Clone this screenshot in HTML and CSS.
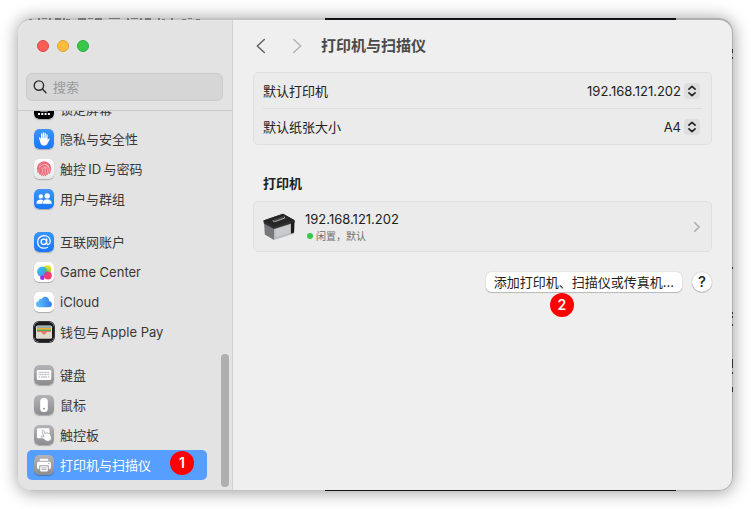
FILE: index.html
```html
<!DOCTYPE html>
<html lang="zh-CN">
<head>
<meta charset="utf-8">
<title>打印机与扫描仪</title>
<link rel="stylesheet" href="styles.css">
</head>
<body>
<svg width="0" height="0" class="defs" aria-hidden="true">
  <defs>
    <linearGradient id="blue" x2="0" y2="1"><stop stop-color="#3d95fb"/><stop offset="1" stop-color="#1877fb"/></linearGradient>
    <linearGradient id="gray" x2="0" y2="1"><stop stop-color="#b4b4b8"/><stop offset="1" stop-color="#8c8c91"/></linearGradient>
    <linearGradient id="white" x2="0" y2="1"><stop stop-color="#ffffff"/><stop offset="1" stop-color="#e6e6e6"/></linearGradient>
    <linearGradient id="cloud" x2="1" y2="0"><stop stop-color="#62c3f8"/><stop offset="1" stop-color="#2f7cf0"/></linearGradient>
    <linearGradient id="gc1" x2="1" y2="1"><stop stop-color="#35c6f4"/><stop offset="1" stop-color="#4a8cf5"/></linearGradient>
    <linearGradient id="gc2" x2="0" y2="1"><stop stop-color="#fbe21c"/><stop offset="1" stop-color="#7ed04a"/></linearGradient>
  </defs>
</svg>
<div class="frame">
  <svg class="fringe fringe-top" width="190" height="2" aria-hidden="true">
    <path fill="#777" d="M1 1h3v1h-3zM10 0h2v2h-2zM14 0h5v1h-5zM21 0h2v2h-2zM27 0h6v2h-6zM35 0h2v2h-2zM38 1h4v1h-4zM50 0h8v2h-8zM60 0h5v1h-5zM67 0h7v2h-7zM81 0h11v1h-11zM99 0h2v2h-2zM103 0h7v1h-7zM112 0h2v2h-2zM117 0h6v2h-6zM130 0h2v2h-2zM134 1h3v1h-3zM143 0h2v2h-2zM154 1h4v1h-4zM160 0h4v1h-4zM168 1h4v1h-4z"/>
  </svg>
  <svg class="fringe fringe-right" width="1" height="400" aria-hidden="true">
    <path fill="#333" d="M0 31h1v4H0zM0 39h1v2H0zM0 249h1v2H0zM0 294h1v2H0zM0 298h1v2H0zM0 306h1v2H0zM0 341h1v9H0zM0 354h1v2H0zM0 369h1v5H0z"/>
  </svg>
  <div class="window">
    <aside class="sidebar">
      <div class="sidebar-head">
        <div class="lights">
          <button class="light red" aria-label="关闭"></button>
          <button class="light yellow" aria-label="最小化"></button>
          <button class="light green" aria-label="缩放"></button>
        </div>
        <label class="search">
          <svg width="14" height="14" viewBox="0 0 14 14" fill="none" stroke="#2b2b2b" stroke-width="1.4" stroke-linecap="round"><circle cx="5.9" cy="5.6" r="4.7"/><path d="M9.4 9.1 13 12.7"/></svg>
          <input type="text" placeholder="搜索" aria-label="搜索">
        </label>
      </div>
      <nav class="list">
        <div class="group">
          <a class="item" href="#lock">
            <svg class="icon" viewBox="0 0 20 20"><rect width="20" height="20" rx="5"/><path d="M7 9V7a3 3 0 0 1 6 0v2" fill="none" stroke="#fff" stroke-width="1.5"/><rect x="6" y="7" width="8" height="5.5" rx="1" fill="#fff"/><path d="M4 14h2v2H4zM7.3 14h2v2h-2zM10.6 14h2v2h-2zM13.9 14h2v2h-2z" fill="#fff"/></svg>锁定屏幕</a>
          <a class="item" href="#privacy">
            <svg class="icon" viewBox="0 0 20 20"><rect width="20" height="20" rx="5" fill="url(#blue)"/><path d="M5.800 11.500 5 9.200c-.2-.9.9-1.200 1.300-.5l.7 1.500V5c0-.9 1.300-.9 1.300 0v3.800h.4V3.900c0-.9 1.400-.9 1.400 0v4.900h.4V4.300c0-.9 1.400-.9 1.400 0v4.800h.4V5.800c0-.9 1.300-.9 1.300 0v5.100l.8-1c.7-.7 1.500-.2 1.100.6l-2 4c-.6 1.400-1.700 2.100-3.400 2.100-2.400 0-3.500-1.300-4.300-5.100z" fill="#fff"/><path d="M8.500 5v4M10.300 4.500V9M12.100 5v4" stroke="#9cc9fc" stroke-width=".5"/></svg>隐私与安全性</a>
          <a class="item" href="#touchid">
            <svg class="icon" viewBox="0 0 20 20"><rect width="20" height="20" rx="5" fill="url(#white)"/><circle cx="10" cy="9.800" r="7" fill="#f6b9c0"/><g fill="none" stroke="#eb5668" stroke-width=".9" stroke-linecap="round"><path d="M4.200 6.200c3-4.600 9-4.600 11.800 0M3.400 10c.2-8 13-9 13.400.2M3.900 13c-1.200-9.700 12-12 12.300-2.500 0 1.700-.2 3-.8 4M5.500 15C2.400 5.600 14.100 3.700 14.300 10.600c0 2-.3 3.700-1.200 5M7.300 16.200c-4-9.600 5.200-11.600 5.300-5.600 0 2.200-.3 4-1.200 6M9.300 16.800c-1.500-3-2-4.600-1.800-6.100.3-2.700 3.200-2.400 3.400-.1.100 2-.1 3.400-.6 4.800M9.300 10.400c0 1.400.1 2.600.5 3.800"/></g></svg>触控&thinsp;ID&thinsp;与密码</a>
          <a class="item" href="#users">
            <svg class="icon" viewBox="0 0 20 20"><rect width="20" height="20" rx="5" fill="url(#blue)"/><g fill="#fff"><circle cx="6.800" cy="7.400" r="2.200"/><path d="M2.400 14.300c0-5 8.200-5 8.200 0 0 .4-.2.5-.5.5H2.900c-.3 0-.5-.1-.5-.5z"/><circle cx="13.200" cy="7" r="2.700"/><path stroke="#2b86fb" stroke-width=".6" d="M8.400 14.400c0-5.800 9.600-5.800 9.600 0 0 .5-.2.700-.6.700H9c-.4 0-.6-.2-.6-.7z"/></g></svg>用户与群组</a>
        </div>
        <div class="group">
          <a class="item" href="#accounts">
            <svg class="icon" viewBox="0 0 20 20"><rect width="20" height="20" rx="5" fill="url(#blue)"/><g fill="none" stroke="#fff" stroke-width="1.300" stroke-linecap="round"><circle cx="9.800" cy="9.800" r="2.700"/><path d="M12.700 7v4.100c0 2.200 3.500 2 3.500-1.600 0-3.400-2.600-5.800-6.200-5.800-3.700 0-6.400 2.700-6.400 6.300 0 3.700 2.600 6.200 6.400 6.200 1.300 0 2.400-.2 3.300-.7"/></g></svg>互联网账户</a>
          <a class="item" href="#gamecenter">
            <svg class="icon" viewBox="0 0 20 20"><rect width="20" height="20" rx="5" fill="#fff"/><circle cx="13.300" cy="7.200" r="4" fill="url(#gc2)"/><circle cx="8.300" cy="9.700" r="5.200" fill="url(#gc1)"/><circle cx="8.300" cy="15.800" r="2.200" fill="#9b2be6"/><path d="M10.400 6a4 4 0 0 0 3 5.200 5 5 0 0 0-3-5.200z" fill="#43c46a"/><circle cx="13.900" cy="13.500" r="3.900" fill="#fb3a6b"/><path d="M10 13.400c.1-2.200 1.500-3.500 3.400-3.700.3 2-.9 4.400-3.200 5z" fill="#c23fae"/></svg>Game Center</a>
          <a class="item" href="#icloud">
            <svg class="icon" viewBox="0 0 20 20"><rect width="20" height="20" rx="5" fill="#fff"/><path d="M5.500 15.200c-4.600 0-4.700-5.600-.9-6 .1-2 1.800-2.800 3.100-2.300 2-3.600 7.300-2.300 7.400 2 3.900.6 3.800 6.300-.3 6.300z" fill="url(#cloud)"/></svg>iCloud</a>
          <a class="item" href="#wallet">
            <svg class="icon wallet" viewBox="0 0 20 20"><rect width="20" height="20" rx="5" fill="#1d1d1f"/><rect x="2" y="3.600" width="16" height="13" rx="1.600" fill="#dedacd"/><path d="M3 4.500h14v1.300H3z" fill="#4e9dc8"/><path d="M3 5.800h14v1.600H3z" fill="#f7a82c"/><path d="M3 7.400h14V9H3z" fill="#4caf50"/><path d="M3 9h14v1.200H3z" fill="#ef7262"/><path d="M2 10h16v5c0 1-.6 1.600-1.600 1.600H3.600C2.600 16.600 2 16 2 15z" fill="#dedacd"/><path d="M7 9.800h6c-.9.500-1 2.700-3 2.700S7.900 10.300 7 9.800z" fill="#ef7262"/></svg>钱包与&thinsp;Apple Pay</a>
        </div>
        <div class="group">
          <a class="item" href="#keyboard">
            <svg class="icon" viewBox="0 0 20 20"><rect width="20" height="20" rx="5" fill="url(#gray)"/><rect x="2.800" y="5" width="14.400" height="10" rx="1.300" fill="#fff"/><path d="M4.500 7.500h11M4.500 9.600h11" stroke="#bcbcc0" stroke-width="1.400" stroke-dasharray="1.200 .4"/><path d="M4.500 12h1.500M7 12h6M14 12h1.500" stroke="#b0b0b4" stroke-width="1.200"/></svg>键盘</a>
          <a class="item" href="#mouse">
            <svg class="icon" viewBox="0 0 20 20"><rect width="20" height="20" rx="5" fill="url(#gray)"/><rect x="6.200" y="3" width="7.600" height="14" rx="3.500" fill="#fff"/><circle cx="10" cy="13.700" r=".9" fill="#8c8c91"/></svg>鼠标</a>
          <a class="item" href="#trackpad">
            <svg class="icon" viewBox="0 0 20 20"><rect width="20" height="20" rx="5" fill="url(#gray)"/><rect x="3" y="3.300" width="12.500" height="10" rx="1.300" fill="#fff"/><path d="M8.200 6.300c-.4-1.200 1.100-1.800 1.600-.6l1.400 3 .2-.6c.5-.6 1.200-.4 1.500.1.500-.5 1.200-.4 1.500.3.700-.4 1.400 0 1.700.7l1.100 2.500c.7 2-.2 3.500-1.900 4.200-2.100.8-3.500.2-4.700-1.100l-3.200-2.600c-.8-.9.1-1.700 1.100-1.200l1.500.8z" fill="#fff" stroke="#98989c" stroke-width=".7"/></svg>触控板</a>
          <a class="item selected" href="#printers" aria-current="page">
            <svg class="icon" viewBox="0 0 20 20"><rect width="20" height="20" rx="5" fill="url(#gray)"/><path d="M5.700 5.800V5c0-.7.500-1.200 1.200-1.200h6.200c.7 0 1.200.5 1.200 1.200v.8z" fill="#fff"/><path d="M5.200 14.300H4.800c-1 0-1.700-.7-1.700-1.700V8.400c0-1 .7-1.700 1.700-1.700h10.400c1 0 1.700.7 1.700 1.700v4.200c0 1-.7 1.700-1.700 1.700h-.4v-3.200c0-.5-.3-.8-.8-.8H6c-.5 0-.8.300-.8.8z" fill="#fff"/><circle cx="14.800" cy="8.600" r=".7" fill="#98989c"/><rect x="6.200" y="11.200" width="7.600" height="5.200" rx=".8" fill="#fff"/><path d="M7.500 12.900h5M7.500 14.600h5" stroke="#98989c" stroke-width=".8"/></svg>打印机与扫描仪<span class="badge on-item">1</span></a>
        </div>
      </nav>
      <div class="scrollbar"></div>
    </aside>
    <main class="main">
      <header class="toolbar">
        <button class="nav-button" aria-label="后退"><svg width="10" height="16" viewBox="0 0 10 16" fill="none" stroke="#666" stroke-width="1.600" stroke-linecap="round" stroke-linejoin="round"><path d="M8.300 1.500 1.300 8l7 6.500"/></svg></button>
        <button class="nav-button" aria-label="前进" disabled><svg width="10" height="16" viewBox="0 0 10 16" fill="none" stroke="#b5b5b5" stroke-width="1.600" stroke-linecap="round" stroke-linejoin="round"><path d="m1.700 1.500 7 6.500-7 6.500"/></svg></button>
        <h1>打印机与扫描仪</h1>
      </header>
      <section class="card settings">
        <div class="row">
          <label for="printer">默认打印机</label>
          <div class="picker">
            <select id="printer"><option>192.168.121.202</option></select>
            <svg class="stepper" width="16" height="16" viewBox="0 0 16 16"><rect width="16" height="16" rx="4" fill="#dedede"/><path d="M4.900 6.200 8 3.300l3.100 2.900M4.900 9.800 8 12.700l3.100-2.900" fill="none" stroke="#222" stroke-width="1.600" stroke-linecap="round" stroke-linejoin="round"/></svg>
          </div>
        </div>
        <div class="row">
          <label for="paper">默认纸张大小</label>
          <div class="picker">
            <select id="paper"><option>A4</option></select>
            <svg class="stepper" width="16" height="16" viewBox="0 0 16 16"><rect width="16" height="16" rx="4" fill="#dedede"/><path d="M4.900 6.200 8 3.300l3.100 2.900M4.900 9.800 8 12.700l3.100-2.900" fill="none" stroke="#222" stroke-width="1.600" stroke-linecap="round" stroke-linejoin="round"/></svg>
          </div>
        </div>
      </section>
      <h2>打印机</h2>
      <a class="card printer" href="#printer-detail">
        <svg width="32" height="28" viewBox="0 0 32 28">
          <path d="m1 9 10 4.500V27L1.800 21.500z" fill="#77787c"/>
          <path d="M11 14.500 31 8v12.500L11 27z" fill="#b9babd"/>
          <path d="m12.500 16 14.500-4v8l-14.500 4.500z" fill="#c9cacd"/>
          <path d="M.4 7.600 20 .8l11.600 6.400v2.300L11 16 .8 10.600z" fill="#303031"/>
          <path d="M.4 7.600 20 .8l11.600 6.400L11 13.500z" fill="#262627"/>
          <path d="M28 9.500 31.500 8l-.4 11.500-3.100 1.300z" fill="#1b1b1c"/>
          <path d="m8.600 7.600 11-4.200 3.500 1.900-11.500 4.200z" fill="#454546"/>
          <path d="m9.800 7.700 1.800 1 10-3.600-.2-1.500" fill="none" stroke="#aaa" stroke-width="1"/>
        </svg>
        <div class="printer-text">
          <div class="printer-name">192.168.121.202</div>
          <div class="status"><span class="dot"></span>闲置，默认</div>
        </div>
        <svg width="8" height="12" viewBox="0 0 8 12" fill="none" stroke="#adadad" stroke-width="1.600" stroke-linecap="round" stroke-linejoin="round"><path d="m1.800 1.700 4.300 4.300-4.300 4.300"/></svg>
      </a>
      <div class="actions">
        <button class="add">添加打印机、扫描仪或传真机...<span class="badge on-button">2</span></button>
        <button class="help" aria-label="帮助">?</button>
      </div>
    </main>
  </div>
</div>
</body>
</html>
```
FILE: styles.css
```css
* {
  box-sizing: border-box;
}

body {
  margin: 0;
  padding: 18px;
  height: 100vh;
  background: #fff;
  color: #222;
  font: 13px/20px Inter, "Noto Sans CJK SC", sans-serif;
}

button,
input,
select {
  font: inherit;
  color: inherit;
  margin: 0;
  padding: 0;
  border: 0;
  background: none;
}

a {
  color: inherit;
  text-decoration: none;
}

.defs {
  position: absolute;
}

/* The strip of desktop that shows around the window's edge. */
.frame {
  position: relative;
  height: 100%;
  padding: 2px 1px 1px 0;
  border-radius: 14px;
  background: linear-gradient(90deg, #c4c4c4 43%, #141216 43% 92%, #b0b0b0 92%);
  box-shadow: 0 1px 17px rgba(0, 0, 0, 0.4);
}

.fringe {
  position: absolute;
  top: 0;
}

.fringe-top {
  left: 10px;
}

.fringe-right {
  right: 0;
}

.window {
  position: relative;
  display: flex;
  height: 100%;
  border-radius: 13px;
  overflow: hidden;
  background: #efefef;
}

.sidebar {
  position: relative;
  display: flex;
  flex-direction: column;
  flex: none;
  width: 215px;
  background: #e3e3e3;
  border-right: 1px solid #d2d2d2;
  color: #383838;
}

.sidebar-head {
  padding: 20px 9px 9px 8px;
  border-bottom: 1px solid #c9c9c9;
}

.lights {
  display: flex;
  gap: 8px;
  padding: 0 11px;
  margin-bottom: 21px;
}

.light {
  width: 12px;
  height: 12px;
  border-radius: 50%;
}

.red {
  background: #fc5b56;
  border: 1px solid #e04845;
}

.yellow {
  background: #fdbc3a;
  border: 1px solid #dfa036;
}

.green {
  background: #38c748;
  border: 1px solid #2eac3a;
}

.search {
  display: flex;
  align-items: center;
  gap: 6px;
  height: 28px;
  padding: 0 6px;
  border: 1px solid #cbcbcb;
  border-radius: 6px;
  background: #d6d6d6;
}

.search input {
  flex: 1;
  min-width: 0;
  outline: 0;
}

.search input::placeholder {
  color: #9a9a9a;
}

.list {
  flex: 1;
  min-height: 0;
  display: flex;
  flex-direction: column;
  justify-content: flex-end;
  gap: 13px;
  padding: 0 25px 10px 9px;
  overflow: hidden;
}

.item {
  position: relative;
  display: flex;
  align-items: center;
  gap: 6px;
  height: 30px;
  padding: 0 7px;
  border-radius: 5px;
  white-space: nowrap;
}

.selected {
  background: #569eff;
  color: #fff;
}

.icon {
  width: 20px;
  height: 20px;
  flex: none;
  border-radius: 5px;
  box-shadow: 0 1px 1px rgba(0, 0, 0, 0.25);
}

.wallet {
  box-shadow: 0 0 0 1px #3a3a3c;
}

.scrollbar {
  position: absolute;
  right: 3px;
  bottom: 3px;
  width: 8px;
  height: 133px;
  border-radius: 4px;
  background: #afafaf;
}

.badge {
  position: absolute;
  width: 24px;
  height: 24px;
  border-radius: 50%;
  background: #f00;
  color: #fff;
  font-size: 14px;
  font-weight: 600;
  line-height: 24px;
  text-align: center;
}

.on-item {
  right: 13px;
  top: 1px;
}

.on-button {
  left: 64px;
  top: 21px;
}

.main {
  flex: 1;
  min-width: 0;
  padding: 0 20px;
}

.toolbar {
  display: flex;
  align-items: center;
  height: 52px;
}

.nav-button {
  display: flex;
  justify-content: center;
  width: 16px;
  margin-right: 20px;
}

.nav-button:disabled {
  margin-right: 16px;
}

h1 {
  margin: 0;
  font-size: 15px;
  font-weight: 700;
  color: #4a4a4a;
}

.card {
  border: 1px solid #dfdfdf;
  border-radius: 5px;
  background: #ebebeb;
}

.settings {
  padding: 0 9px;
}

.row {
  display: flex;
  align-items: center;
  justify-content: space-between;
  height: 35px;
  padding-right: 2px;
}

.row + .row {
  height: 36px;
  border-top: 1px solid #dedede;
}

.picker {
  display: flex;
  align-items: center;
  gap: 3px;
}

.picker select {
  appearance: none;
  text-align: right;
  text-align-last: right;
}

h2 {
  margin: 28px 10px 8px;
  font-size: 13px;
  font-weight: 600;
}

.printer {
  display: flex;
  align-items: center;
  height: 51px;
  padding: 0 10px 0 9px;
}

.printer-text {
  flex: 1;
  margin-left: 10px;
}

.printer-name {
  line-height: 18px;
}

.status {
  display: flex;
  align-items: center;
  gap: 3px;
  padding-left: 2px;
  font-size: 10px;
  line-height: 16px;
  color: #707070;
}

.dot {
  width: 6px;
  height: 6px;
  border-radius: 50%;
  background: #38c748;
}

.actions {
  display: flex;
  justify-content: flex-end;
  gap: 10px;
  margin-top: 20px;
}

.add,
.help {
  position: relative;
  height: 20px;
  background: #fff;
  box-shadow: 0 0 1px rgba(0, 0, 0, 0.35), 0 1px 1px rgba(0, 0, 0, 0.2);
}

.add {
  padding: 0 8px;
  border-radius: 5px;
}

.help {
  width: 20px;
  border-radius: 50%;
  font-size: 15px;
  font-weight: 500;
}
```
